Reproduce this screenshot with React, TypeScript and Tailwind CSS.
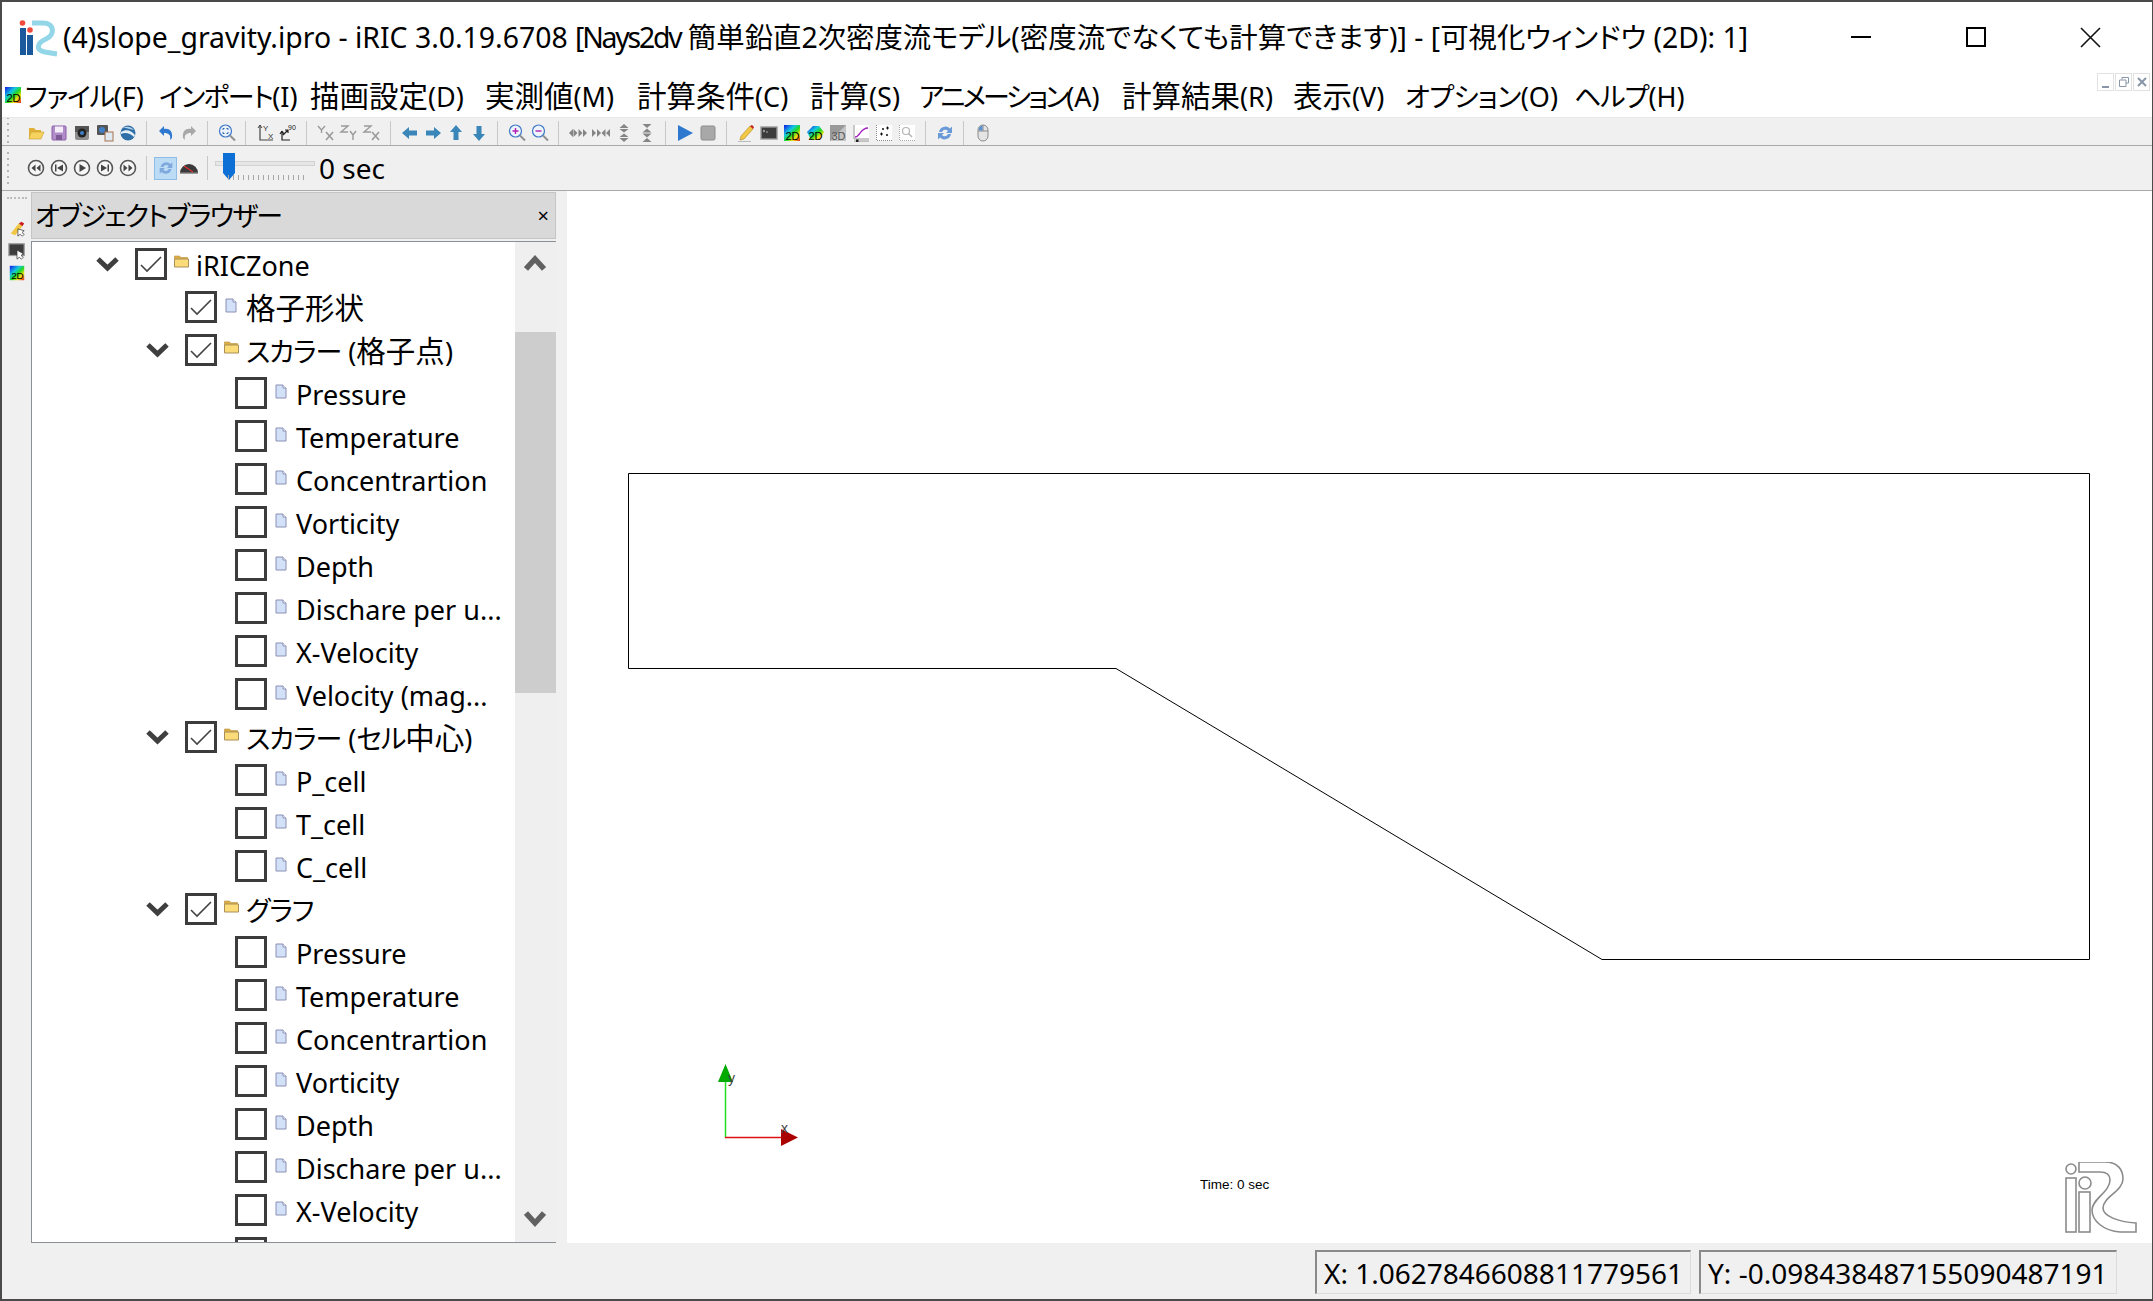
import type { ReactNode } from "react";

const FONT = "[font-family:'Noto_Sans','Noto_Sans_CJK_JP',sans-serif]";

type Row = { label: string; level: 0 | 1 | 2; folder?: boolean; checked?: boolean; open?: boolean };

const scalars = ["Pressure", "Temperature", "Concentrartion", "Vorticity", "Depth", "Dischare per u...", "X-Velocity"];

const rows: Row[] = [
  { label: "iRICZone", level: 0, folder: true, checked: true, open: true },
  { label: "格子形状", level: 1, checked: true },
  { label: "スカラー (格子点)", level: 1, folder: true, checked: true, open: true },
  ...scalars.map((label): Row => ({ label, level: 2 })),
  { label: "Velocity (mag...", level: 2 },
  { label: "スカラー (セル中心)", level: 1, folder: true, checked: true, open: true },
  { label: "P_cell", level: 2 },
  { label: "T_cell", level: 2 },
  { label: "C_cell", level: 2 },
  { label: "グラフ", level: 1, folder: true, checked: true, open: true },
  ...scalars.map((label): Row => ({ label, level: 2 })),
  { label: "", level: 2 },
];

const levelPad = { 0: "pl-[63px]", 1: "pl-[113px]", 2: "pl-[163px]" };

const menus = [
  { label: "ファイル(F)", cls: "w-[134px]", kana: "tracking-[-1.2px]" },
  { label: "インポート(I)", cls: "w-[151px]", kana: "tracking-[-1.6px]" },
  { label: "描画設定(D)", cls: "w-[175px]", kana: "" },
  { label: "実測値(M)", cls: "w-[152px]", kana: "" },
  { label: "計算条件(C)", cls: "w-[173px]", kana: "" },
  { label: "計算(S)", cls: "w-[109px]", kana: "" },
  { label: "アニメーション(A)", cls: "w-[203px]", kana: "tracking-[-3px]" },
  { label: "計算結果(R)", cls: "w-[171px]", kana: "" },
  { label: "表示(V)", cls: "w-[112px]", kana: "" },
  { label: "オプション(O)", cls: "w-[169px]", kana: "tracking-[-0.6px]" },
  { label: "ヘルプ(H)", cls: "w-[109px]", kana: "tracking-[-1px]" },
];

// kanji sit wider than the kana and latin in the original UI font, so size them apart
function Jp({ text, kana }: { text: string; kana: string }) {
  const parts = text.match(/[\u4e00-\u9fff]+|[\u30a0-\u30ff]+|[^\u4e00-\u9fff\u30a0-\u30ff]+/g) ?? [];
  return (
    <>
      {parts.map((part, i) => {
        if (/[\u4e00-\u9fff]/.test(part)) {
          return (
            <span key={i} className="text-[29.5px] leading-none [font-feature-settings:normal]">
              {part}
            </span>
          );
        }
        if (/[\u30a0-\u30ff]/.test(part)) {
          return (
            <span key={i} className={kana}>
              {part}
            </span>
          );
        }
        return <span key={i}>{part}</span>;
      })}
    </>
  );
}

function Ico({ children }: { children: ReactNode }) {
  return (
    <div className="flex h-[24px] w-[23px] shrink-0 items-center justify-center">
      <svg width="20" height="20" viewBox="0 0 20 20">
        {children}
      </svg>
    </div>
  );
}

function Sep() {
  return (
    <div className="flex h-[24px] w-[15px] shrink-0 justify-center">
      <div className="h-full w-px bg-[#c8c8c8]" />
    </div>
  );
}

function Grip() {
  return (
    <div className="flex h-[32px] w-[4px] shrink-0 flex-col justify-between">
      {[0, 1, 2, 3, 4, 5].map((i) => (
        <div key={i} className="h-[2px] w-[2px] bg-[#b5b5b5]" />
      ))}
    </div>
  );
}

function Rainbow({ id, label, lite }: { id: string; label: string; lite?: boolean }) {
  return (
    <>
      <defs>
        <linearGradient id={id} x1="0" y1="0" x2="1" y2="1">
          <stop offset="0" stopColor="#1414e6" />
          <stop offset="0.35" stopColor="#12c8e0" />
          <stop offset="0.55" stopColor="#22d822" />
          <stop offset="0.75" stopColor="#f2e214" />
          <stop offset="1" stopColor="#e81c1c" />
        </linearGradient>
      </defs>
      {lite ? (
        <path d="M2 9 L8 3 H14 L19 9 L15 17 H6 Z" fill={`url(#${id})`} />
      ) : (
        <rect x="2" y="2" width="16" height="16" fill={`url(#${id})`} />
      )}
      <text x="10.5" y="17" textAnchor="middle" fontSize="11" fontFamily="Liberation Sans" fill="#000">
        {label}
      </text>
    </>
  );
}

function MediaBtn({ d }: { d: string }) {
  return (
    <Ico>
      <circle cx="10" cy="10" r="7.5" fill="#f6f6f6" stroke="#555" strokeWidth="1.6" />
      <path d={d} fill="#444" />
    </Ico>
  );
}

function Toolbar1() {
  const arrow = "#3a86b8";
  const gray = "#9a9a9a";
  return (
    <div className="flex h-[28px] items-center border-b border-[#a9a9a9] bg-[#f0f0f0] pt-[2px] pl-[5px]">
      <div className="mr-[13px]">
        <Grip />
      </div>
      <Ico>
        <path d="M3 5 H8 L10 7 H15 V9 H6 L3 15 Z" fill="#e0b13a" />
        <path d="M5 9 H18 L15 16 H3 Z" fill="#f6d35f" stroke="#c99a2e" strokeWidth="0.6" />
      </Ico>
      <Ico>
        <rect x="3" y="3" width="14" height="14" rx="1" fill="#b08cc8" stroke="#8a5fa8" />
        <rect x="6" y="3.5" width="8" height="6" fill="#f4eef8" />
        <rect x="7" y="12" width="6" height="5" fill="#7c5a96" />
      </Ico>
      <Ico>
        <rect x="3" y="3" width="14" height="14" rx="2" fill="#8d8d8d" />
        <rect x="3" y="3" width="14" height="6" fill="#555" />
        <circle cx="10" cy="10" r="4.5" fill="#222" />
        <circle cx="10" cy="10" r="2" fill="#3f7fc6" />
      </Ico>
      <Ico>
        <rect x="2" y="2" width="11" height="10" rx="1" fill="#555" />
        <circle cx="7" cy="7" r="3" fill="#3f7fc6" />
        <rect x="10" y="9" width="8" height="9" fill="#dfe9f2" stroke="#a87050" />
      </Ico>
      <Ico>
        <circle cx="10" cy="10" r="7.5" fill="#2f6fa8" />
        <path d="M3 9 C8 6 13 7 17 12 L16 14 C12 10 7 9 3 11 Z" fill="#e6eef5" />
        <path d="M5 4.5 C9 3 13 4 16 7 L12 6 C9 5 7 5 5 4.5 Z" fill="#b8d4ea" />
      </Ico>
      <Sep />
      <Ico>
        <path d="M3 8 L8 3 V6 C13 5 17 8 16 15 L14 17 C15 12 13 10 8 10 V13 Z" fill="#2f78d0" />
      </Ico>
      <Ico>
        <path d="M17 8 L12 3 V6 C7 5 3 8 4 15 L6 17 C5 12 7 10 12 10 V13 Z" fill="#a8a8a8" />
      </Ico>
      <Sep />
      <Ico>
        <circle cx="8.5" cy="8" r="6" fill="#eaf2fb" stroke="#3d77c8" strokeWidth="1.2" />
        <path d="M6 7 V5.5 H7.5 M11 7 V5.5 H9.5 M6 9 V10.5 H7.5 M11 9 V10.5 H9.5" stroke="#2f62b0" fill="none" />
        <path d="M13 12.5 L18 17.5" stroke="#909090" strokeWidth="2" />
      </Ico>
      <Sep />
      <Ico>
        <path d="M5 2 V17 H18" stroke="#444" fill="none" strokeWidth="1.2" />
        <path d="M3 5 L5 2 L7 5" stroke="#444" fill="none" />
        <text x="8" y="8" fontSize="8" fontFamily="Liberation Sans" fill="#333">Y</text>
        <text x="13" y="16" fontSize="8" fontFamily="Liberation Sans" fill="#333">X</text>
      </Ico>
      <Ico>
        <path d="M4 8 V17 H12 M4 8 L2 11 M4 8 L6 11 M5 12 L10 7 M10 7 V10 M10 7 H7" stroke="#222" fill="none" strokeWidth="1.2" />
        <text x="10" y="7" fontSize="7" fontFamily="Liberation Sans" fill="#222">90</text>
      </Ico>
      <Sep />
      <Ico>
        <path d="M2 3 L5.5 7 L9 3 M5.5 7 V10" stroke={gray} fill="none" strokeWidth="1.4" />
        <path d="M10 9 L17 17 M17 9 L10 17" stroke={gray} strokeWidth="1.6" />
      </Ico>
      <Ico>
        <path d="M2 3 H9 L2 9 H9" stroke={gray} fill="none" strokeWidth="1.4" />
        <path d="M11 8 L14 12 L17 8 M14 12 V17" stroke={gray} fill="none" strokeWidth="1.4" />
      </Ico>
      <Ico>
        <path d="M2 3 H9 L2 9 H9" stroke={gray} fill="none" strokeWidth="1.4" />
        <path d="M10 9 L17 17 M17 9 L10 17" stroke={gray} strokeWidth="1.6" />
      </Ico>
      <Sep />
      <Ico>
        <path d="M2 10 L9 4 V7.5 H17 V12.5 H9 V16 Z" fill={arrow} />
      </Ico>
      <Ico>
        <path d="M18 10 L11 4 V7.5 H3 V12.5 H11 V16 Z" fill={arrow} />
      </Ico>
      <Ico>
        <path d="M10 2 L16 9 H12.5 V17 H7.5 V9 H4 Z" fill={arrow} />
      </Ico>
      <Ico>
        <path d="M10 18 L16 11 H12.5 V3 H7.5 V11 H4 Z" fill={arrow} />
      </Ico>
      <Sep />
      <Ico>
        <circle cx="8.5" cy="8" r="6" fill="#eef4fb" stroke="#3d77c8" strokeWidth="1.2" />
        <path d="M5.5 8 H11.5 M8.5 5 V11" stroke="#b020b0" strokeWidth="1.4" />
        <path d="M13 12.5 L18 17.5" stroke="#909090" strokeWidth="2" />
      </Ico>
      <Ico>
        <circle cx="8.5" cy="8" r="6" fill="#eef4fb" stroke="#3d77c8" strokeWidth="1.2" />
        <path d="M5.5 8 H11.5" stroke="#b020b0" strokeWidth="1.4" />
        <path d="M13 12.5 L18 17.5" stroke="#909090" strokeWidth="2" />
      </Ico>
      <Sep />
      <Ico>
        <path d="M1 10 L5 6 V14 Z M9.5 10 L5.5 6 V14 Z M10.5 6 L14.5 10 L10.5 14 Z M19 10 L15 6 V14 Z" fill="#858585" />
      </Ico>
      <Ico>
        <path d="M1 6 L5 10 L1 14 Z M6 6 L10 10 L6 14 Z M14.5 6 L10.5 10 L14.5 14 Z M19 6 L15 10 L19 14 Z" fill="#858585" />
      </Ico>
      <Ico>
        <path d="M10 1 L14.5 5 H5.5 Z M5.5 6 H14.5 L10 9.5 Z M10 10.5 L14.5 14 H5.5 Z M5.5 15 H14.5 L10 19 Z" fill="#858585" />
      </Ico>
      <Ico>
        <path d="M5.5 1 H14.5 L10 5 Z M10 5.5 L14.5 9.5 H5.5 Z M5.5 10.5 H14.5 L10 14.5 Z M10 15 L14.5 19 H5.5 Z" fill="#858585" />
      </Ico>
      <Sep />
      <Ico>
        <path d="M3 2 L18 10 L3 18 Z" fill="#2f78d0" />
      </Ico>
      <Ico>
        <rect x="3" y="3" width="14" height="14" rx="1.5" fill="#a8a8a8" stroke="#8c8c8c" />
      </Ico>
      <Sep />
      <Ico>
        <path d="M5 13 L14 3 L17 6 L8 16 L4 17 Z" fill="#f2c744" stroke="#b08820" strokeWidth="0.6" />
        <path d="M14 3 L17 6 L18 4 L16 2 Z" fill="#c82020" />
        <path d="M2 18.5 H15" stroke="#bbb" />
      </Ico>
      <Ico>
        <rect x="2" y="4" width="16" height="12" fill="#3c3c3c" stroke="#9a9a9a" strokeWidth="1.4" />
        <path d="M4 7 L6 8 L4 9 M7 9 H9" stroke="#ddd" fill="none" strokeWidth="0.7" />
      </Ico>
      <Ico>
        <Rainbow id="rb1" label="2D" />
      </Ico>
      <Ico>
        <Rainbow id="rb2" label="2D" lite />
      </Ico>
      <Ico>
        <rect x="2" y="2" width="16" height="16" fill="#999" />
        <path d="M2 18 L18 2 V18 Z" fill="#c4c4c4" />
        <text x="10.5" y="17" textAnchor="middle" fontSize="11" fontFamily="Liberation Sans" fill="#555">3D</text>
      </Ico>
      <Ico>
        <rect x="2" y="2" width="16" height="16" fill="#fff" />
        <path d="M3 2 V16 H18 M3 18 H18" stroke="#777" fill="none" strokeWidth="0.8" />
        <path d="M4 14 C9 14 9 5 17 5" stroke="#a020c0" fill="none" strokeWidth="1.4" />
        <rect x="5" y="16.5" width="2.5" height="2.5" fill="#222" />
      </Ico>
      <Ico>
        <rect x="2" y="2" width="16" height="16" fill="#fff" />
        <path d="M2.5 2 V17.5 H18" stroke="#888" fill="none" strokeDasharray="1 1" />
        <path d="M6 11 h3 M7.5 9.5 v3 M12 5 h3 M13.5 3.5 v3 M8 6 h2 M9 5 v2 M12 12 h2 M13 11 v2" stroke="#111" />
      </Ico>
      <Ico>
        <rect x="2" y="2" width="16" height="16" fill="#fff" />
        <path d="M2.5 2 V17.5 H18" stroke="#aaa" fill="none" strokeDasharray="1 1" />
        <circle cx="9" cy="8" r="3.5" fill="none" stroke="#b5b5b5" strokeWidth="1.2" />
        <path d="M11.5 10.5 L15 14" stroke="#b5b5b5" strokeWidth="1.6" />
      </Ico>
      <Sep />
      <Ico>
        <path d="M4 9 A6.5 6.5 0 0 1 15 5.5 L17 3.5 V10 H11 L13 8 A3.5 3.5 0 0 0 7 9 Z" fill="#6a9ad8" />
        <path d="M16 11 A6.5 6.5 0 0 1 5 14.5 L3 16.5 V10 H9 L7 12 A3.5 3.5 0 0 0 13 11 Z" fill="#6a9ad8" />
      </Ico>
      <Sep />
      <Ico>
        <rect x="5" y="2" width="10" height="16" rx="5" fill="#e4e4e4" stroke="#8a8a8a" />
        <path d="M5 8 H15 M10 2 V8" stroke="#8a8a8a" />
        <path d="M6 7.5 V5 A4 4 0 0 1 9.5 2.5 V7.5 Z" fill="#5a8fd0" />
      </Ico>
    </div>
  );
}

function Toolbar2() {
  return (
    <div className="flex h-[45px] items-center border-b border-[#a9a9a9] bg-[#f0f0f0] pl-[5px]">
      <div className="mr-[13px]">
        <Grip />
      </div>
      <MediaBtn d="M9.5 6.5 V13.5 L5.5 10 Z M14.5 6.5 V13.5 L10.5 10 Z" />
      <MediaBtn d="M6 6.5 H7.5 V13.5 H6 Z M14 6.5 V13.5 L8 10 Z" />
      <MediaBtn d="M7.5 6 L14 10 L7.5 14 Z" />
      <MediaBtn d="M6 6.5 V13.5 L12 10 Z M12.5 6.5 H14 V13.5 H12.5 Z" />
      <MediaBtn d="M5.5 6.5 V13.5 L9.5 10 Z M10.5 6.5 V13.5 L14.5 10 Z" />
      <Sep />
      <div className="flex h-[23px] w-[23px] shrink-0 items-center justify-center border border-[#8ebde8] bg-[#bcdcf6]">
        <svg width="18" height="18" viewBox="0 0 20 20">
          <path d="M4 9 A6.5 6.5 0 0 1 15 5.5 L17 3.5 V10 H11 L13 8 A3.5 3.5 0 0 0 7 9 Z" fill="#7fa9dc" />
          <path d="M16 11 A6.5 6.5 0 0 1 5 14.5 L3 16.5 V10 H9 L7 12 A3.5 3.5 0 0 0 13 11 Z" fill="#7fa9dc" />
        </svg>
      </div>
      <Ico>
        <path d="M1 15 A9 9 0 0 1 19 15 Z" fill="#3a3a3a" />
        <path d="M1 15 H19" stroke="#777" strokeWidth="1.4" />
        <path d="M5 8 L14 14" stroke="#e03030" strokeWidth="1.2" />
      </Ico>
      <Sep />
      <div className="relative h-[30px] w-[100px] shrink-0">
        <div className="absolute top-[8px] left-0 h-[5px] w-full border border-[#d2d2d2] bg-[#e6e6e6]" />
        <svg className="absolute top-0 left-[7px]" width="14" height="27" viewBox="0 0 14 27">
          <path d="M1 0 H13 V20 L7 27 L1 20 Z" fill="#0b6fd6" />
        </svg>
        <svg className="absolute top-[22px] left-[13px]" width="76" height="6" viewBox="0 0 76 6">
          {Array.from({ length: 16 }).map((_, i) => (
            <path key={i} d={`M${0.5 + i * 5} 0 V5`} stroke="#a6a6a6" />
          ))}
        </svg>
      </div>
      <span className="ml-[4px] text-[28px] leading-none text-black">0 sec</span>
    </div>
  );
}

function RowIcon({ folder }: { folder?: boolean }) {
  return folder ? (
    <svg width="17" height="15" viewBox="0 0 16 15" className="mb-[5px] shrink-0">
      <path d="M1 2 H6 L7.5 3.5 H14 V6 H1 Z" fill="#dcae45" stroke="#b8923a" strokeWidth="0.6" />
      <path d="M1 5 H15 V13 H1 Z" fill="#fbdc78" stroke="#a98f5a" />
    </svg>
  ) : (
    <svg width="12" height="15" viewBox="0 0 12 15" className="mb-[4px] shrink-0">
      <path d="M1 1 H8 L11 4 V14 H1 Z" fill="#d3e1f8" stroke="#8a90b4" />
      <path d="M8 1 V4 H11" fill="#fff" stroke="#8a90b4" />
    </svg>
  );
}

function TreeRow({ row }: { row: Row }) {
  return (
    <div className={`flex h-[43px] shrink-0 items-start ${levelPad[row.level]}`}>
      <div className="flex h-[32px] w-[40px] shrink-0 items-center">
        {row.open && (
          <svg width="25" height="17" viewBox="0 0 25 17">
            <path d="M3 3 L12.5 12 L22 3" stroke="#3f3f3f" strokeWidth="5" fill="none" />
          </svg>
        )}
      </div>
      <div className="flex h-[32px] w-[32px] shrink-0 items-center justify-center border-[3px] border-[#3c3c3c] bg-white">
        {row.checked && (
          <svg width="22" height="18" viewBox="0 0 22 18">
            <path d="M1 10 L7 16 L21 2" stroke="#444" strokeWidth="1.6" fill="none" />
          </svg>
        )}
      </div>
      <div className={`flex h-[32px] shrink-0 items-center ${row.folder ? "ml-[6px] w-[23px]" : "ml-[8px] w-[21px]"}`}>
        <RowIcon folder={row.folder} />
      </div>
      <span className="text-[27px] leading-[36px] whitespace-nowrap text-black">
        <Jp text={row.label} kana="tracking-[-1px]" />
      </span>
    </div>
  );
}

function ObjectBrowser() {
  return (
    <div className="flex w-[554px] shrink-0 bg-[#f0f0f0]">
      <div className="flex w-[29px] shrink-0 flex-col items-center pt-[6px]">
        <div className="mb-[20px] h-[2px] w-[20px] border-t-2 border-dotted border-[#bdbdbd]" />
        <svg width="18" height="18" viewBox="0 0 20 20" className="mb-[5px]">
          <path d="M3 16 L12 5 L16 8 L8 18 Z" fill="#f2c744" />
          <path d="M12 5 L16 8 L18 5 L15 3 Z" fill="#c82020" />
          <path d="M11 11 L11 19 L13.5 17 L16 19 L18 17 L15.5 15 L18 13 Z" fill="#fff" stroke="#333" strokeWidth="0.8" />
        </svg>
        <svg width="18" height="18" viewBox="0 0 20 20" className="mb-[4px]">
          <rect x="1" y="2" width="17" height="13" fill="#3c3c3c" stroke="#9a9a9a" strokeWidth="1.4" />
          <path d="M10 9 L10 19 L12.5 17 L15 19 L17 17 L14.5 15 L17 13 Z" fill="#fff" stroke="#333" strokeWidth="0.8" />
        </svg>
        <svg width="18" height="18" viewBox="0 0 20 20">
          <Rainbow id="rb3" label="2D" />
        </svg>
      </div>
      <div className="flex min-w-0 flex-1 flex-col pt-[1px]">
        <div className="flex h-[47px] shrink-0 items-center justify-between border border-[#c4c4c4] bg-[#d9d9d9] pr-[6px] pl-[3px]">
          <span className="text-[27px] leading-none tracking-[-1.8px] text-black">オブジェクトブラウザー</span>
          <span className="text-[20px] leading-none text-black">×</span>
        </div>
        <div className="mt-[2px] flex min-h-0 flex-1 overflow-hidden border-t border-b border-l border-[#8a8f96] bg-white">
          <div className="flex min-w-0 flex-1 flex-col overflow-hidden pt-[6px]">
            {rows.map((row, i) => (
              <TreeRow key={i} row={row} />
            ))}
          </div>
          <div className="relative flex w-[41px] shrink-0 flex-col bg-[#efefef]">
            <div className="flex h-[90px] shrink-0 items-start justify-center pt-[12px] pr-[2px]">
              <svg width="22" height="18" viewBox="0 0 22 18">
                <path d="M2 15 L11 5 L20 15" stroke="#616161" strokeWidth="5.5" fill="none" />
              </svg>
            </div>
            <div className="h-[361px] shrink-0 bg-[#cdcdcd]" />
            <div className="flex-1" />
            <div className="flex h-[36px] shrink-0 items-start justify-center pt-[4px] pr-[2px]">
              <svg width="22" height="18" viewBox="0 0 22 18">
                <path d="M2 3 L11 13 L20 3" stroke="#616161" strokeWidth="5.5" fill="none" />
              </svg>
            </div>
          </div>
        </div>
      </div>
    </div>
  );
}

function Canvas() {
  return (
    <div className="relative ml-[11px] min-w-0 flex-1 overflow-hidden bg-white">
      <svg className="absolute top-0 left-0" width="1586" height="1052">
        <path d="M61.5 282.5 H1522.5 V768.5 H1035 L549 477.5 H61.5 Z" fill="none" stroke="#000" strokeWidth="1" />
        <path d="M158.5 946 V891" stroke="#22dd22" strokeWidth="1.5" />
        <path d="M151 891 L158.5 873 L166 891 Z" fill="#00aa00" />
        <path d="M158 946.5 H214" stroke="#dd1111" strokeWidth="1.5" />
        <path d="M214 938 L231 946.5 L214 955 Z" fill="#aa0000" />
        <text x="161" y="892" fontSize="14" fontFamily="Liberation Sans" fill="#444">y</text>
        <text x="214" y="942" fontSize="14" fontFamily="Liberation Sans" fill="#444">x</text>
      </svg>
      <span className="absolute top-[987px] left-[633px] text-[13.5px] leading-none text-black [font-family:'Liberation_Sans']">
        Time: 0 sec
      </span>
      <svg className="absolute top-[971px] left-[1498px]" width="72" height="71" viewBox="15 12 72 71">
        <g fill="none" stroke="#8b8b8b" strokeWidth="1.6">
          <circle cx="21" cy="19" r="5" />
          <rect x="16" y="28" width="10" height="54" />
          <circle cx="35" cy="33" r="6" />
          <rect x="29" y="42" width="11" height="40" />
          <path d="M29 12 H55 C68 12 73 20 73 29 C73 41 53 47 53 58 C53 66 68 72 86 73 V82 H70 C54 81 42 71 42 60 C42 49 60 42 60 30 C60 24 55 22 50 22 H29 Z" />
        </g>
      </svg>
    </div>
  );
}

export default function App() {
  return (
    <div className={`flex h-[1301px] w-[2153px] flex-col overflow-hidden border-t-2 border-r border-b-2 border-l-2 border-[#4a4a4a] bg-[#f0f0f0] ${FONT} [font-feature-settings:'palt']`}>
      <header className="flex h-[70px] shrink-0 items-center bg-white">
        <svg className="ml-[8px] shrink-0" width="60" height="50" viewBox="0 0 60 50">
          <path d="M22 11 H33 C45 11 45 23 36 27 C27 31 25 38 35 40 L47 42" fill="none" stroke="#93d6e8" strokeWidth="5" />
          <circle cx="12.5" cy="11" r="2.8" fill="#f04a3c" />
          <rect x="10" y="16" width="6" height="27" fill="#1a5a9c" />
          <circle cx="20" cy="18" r="2.8" fill="#f04a3c" />
          <rect x="17" y="23" width="6" height="20" fill="#1a5a9c" />
        </svg>
        <h1 className="ml-[-7px] text-[28.4px] font-normal whitespace-nowrap text-black">
          (4)slope_gravity.ipro - iRIC 3.0.19.6708 <span className="tracking-[-2.2px]">[Nays2dv</span> 簡単鉛直2次密度流モデル(密度流でなくても計算できます)] - [可視化ウィンドウ (2D): 1]
        </h1>
        <div className="ml-auto flex shrink-0 items-center">
          <div className="flex w-[115px] justify-center">
            <div className="h-[2px] w-[20px] bg-black" />
          </div>
          <div className="flex w-[115px] justify-center">
            <div className="h-[20px] w-[20px] border-2 border-black" />
          </div>
          <div className="mr-[4px] flex w-[115px] justify-center">
            <svg width="21" height="21" viewBox="0 0 21 21">
              <path d="M1 1 L20 20 M20 1 L1 20" stroke="#111" strokeWidth="1.6" />
            </svg>
          </div>
        </div>
      </header>
      <nav className="relative flex h-[46px] shrink-0 items-center border-b border-[#e8e8e8] bg-white">
        <svg className="ml-[1px] shrink-0" width="20" height="20" viewBox="0 0 20 20">
          <Rainbow id="rb0" label="2D" />
        </svg>
        <div className="ml-[2px] flex pt-[4px]">
          {menus.map((m) => (
            <span key={m.label} className={`shrink-0 text-[27px] leading-[40px] whitespace-nowrap text-black ${m.cls}`}>
              <Jp text={m.label} kana={m.kana} />
            </span>
          ))}
        </div>
        <div className="absolute top-[1px] right-[2px] flex gap-px">
          <div className="flex h-[18px] w-[17px] items-end justify-center border border-[#e2e2e2] pb-[2px]">
            <div className="h-[2px] w-[7px] bg-[#8896a8]" />
          </div>
          <div className="flex h-[18px] w-[17px] items-center justify-center border border-[#e2e2e2]">
            <svg width="10" height="10" viewBox="0 0 10 10">
              <path d="M3 2.5 V0.5 H9.5 V6 H7 M0.5 3 H7 V9.5 H0.5 Z" fill="none" stroke="#8896a8" />
            </svg>
          </div>
          <div className="flex h-[18px] w-[17px] items-center justify-center border border-[#e2e2e2]">
            <svg width="10" height="10" viewBox="0 0 10 10">
              <path d="M1 1 L9 9 M9 1 L1 9" stroke="#8896a8" strokeWidth="2" />
            </svg>
          </div>
        </div>
      </nav>
      <Toolbar1 />
      <Toolbar2 />
      <main className="flex min-h-0 flex-1">
        <ObjectBrowser />
        <Canvas />
      </main>
      <footer className="flex h-[56px] shrink-0 items-center justify-end gap-[8px] pt-[2px] pr-[35px]">
        <div className="flex h-[44px] w-[376px] items-center border-t-2 border-r border-b border-l-2 border-t-[#8a8a8a] border-r-[#dcdcdc] border-b-[#dcdcdc] border-l-[#8a8a8a] pl-[7px] text-[28px] whitespace-nowrap text-black">
          X: 1.0627846608811779561
        </div>
        <div className="flex h-[44px] w-[418px] items-center border-t-2 border-r border-b border-l-2 border-t-[#8a8a8a] border-r-[#dcdcdc] border-b-[#dcdcdc] border-l-[#8a8a8a] pl-[7px] text-[28px] whitespace-nowrap text-black">
          Y: -0.098438487155090487191
        </div>
      </footer>
    </div>
  );
}
